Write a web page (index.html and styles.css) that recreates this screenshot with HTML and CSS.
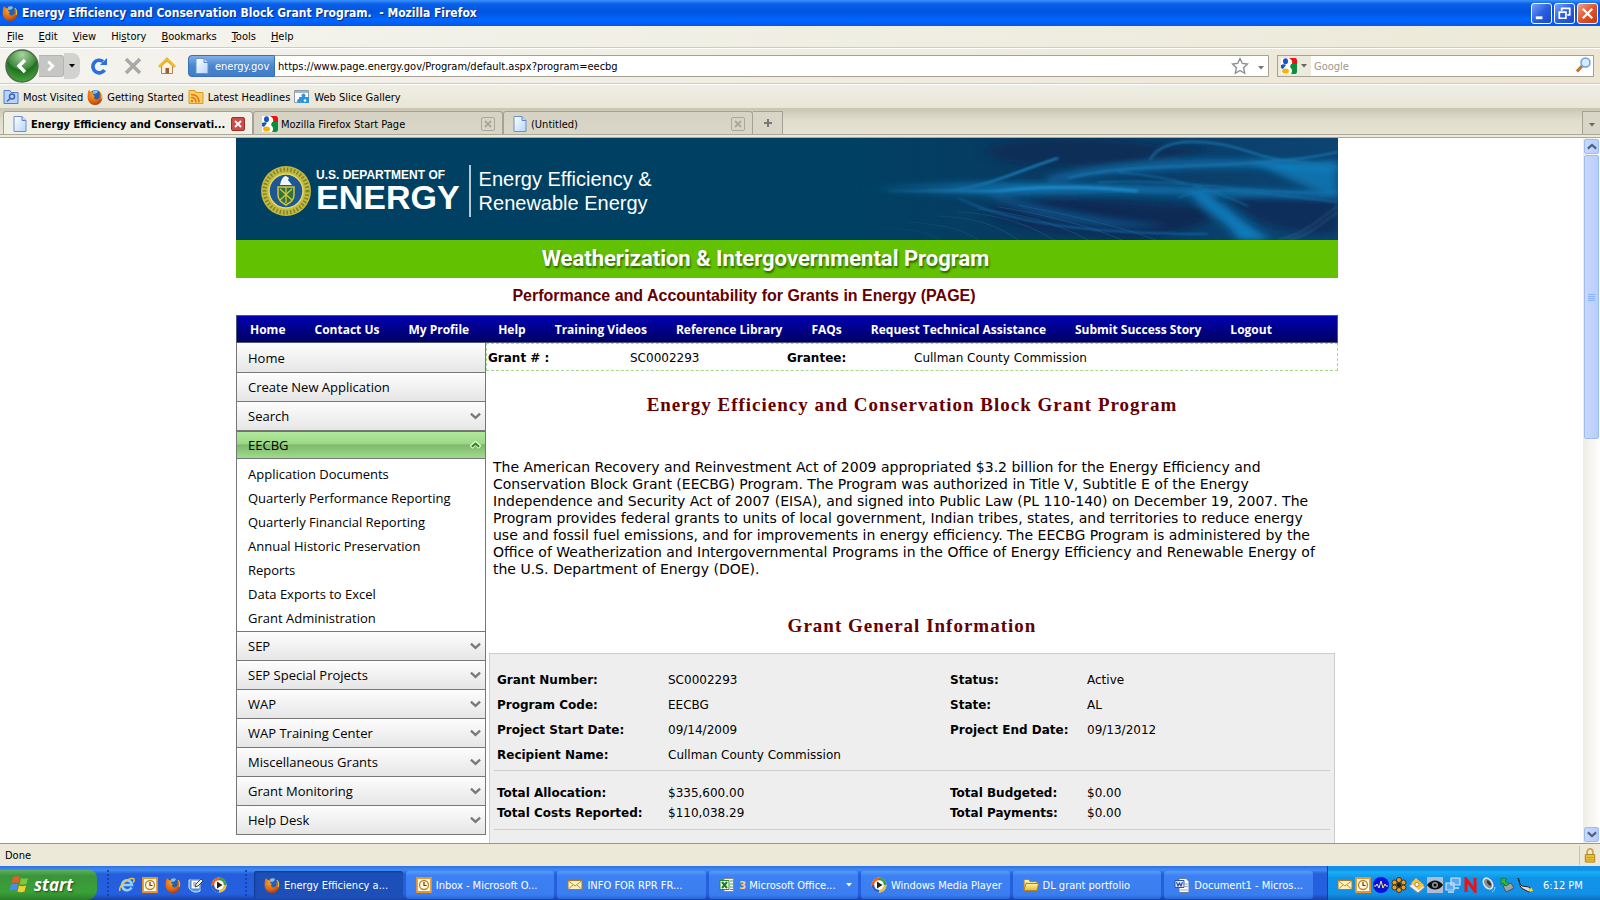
FILE: index.html
```html
<!DOCTYPE html>
<html lang="en">
<head>
  <meta charset="utf-8">
  <title>Energy Efficiency and Conservation Block Grant Program.</title>
  <link rel="stylesheet" href="styles.css">
</head>
<body>
  <!-- shared icons -->
  <svg class="sprite" aria-hidden="true">
    <defs>
      <linearGradient id="g-page" x1="0" y1="0" x2="1" y2="1"><stop offset="0" stop-color="#fff"/><stop offset="1" stop-color="#b5d5fa"/></linearGradient>
      <linearGradient id="g-folder" x1="0" y1="0" x2="0" y2="1"><stop offset="0" stop-color="#fff3a8"/><stop offset="1" stop-color="#e8b93a"/></linearGradient>
      <radialGradient id="g-fox" cx="0.4" cy="0.3" r="0.8"><stop offset="0" stop-color="#f9a52c"/><stop offset="0.6" stop-color="#dd6413"/><stop offset="1" stop-color="#9c3208"/></radialGradient>
      <radialGradient id="g-back" cx="0.5" cy="0.15" r="0.9"><stop offset="0" stop-color="#a9d3a0"/><stop offset="0.5" stop-color="#3f8a3a"/><stop offset="0.55" stop-color="#1f6f20"/><stop offset="1" stop-color="#4fae43"/></radialGradient>
    </defs>
    <symbol id="firefox" viewBox="0 0 16 16">
      <circle cx="8.5" cy="7.5" r="6.5" fill="#2260b4"/>
      <path d="M6 2c2-1 4-1 5 0l-1 2-2 1-2-1z" fill="#7fc0ee"/>
      <path d="M1 3l1-2 2 2c1 0 2 0 3 1L6 6l2 1-1 1c0 2 2 3 4 2 2-1 2-3 1-5l1 1c0-1 0-2-1-3 3 2 4 5 3 8s-4 5-7 5-6-2-7-5C0 7 1 5 1 3z" fill="url(#g-fox)"/>
      <path d="M13 3c2 2 2 5 1 7" stroke="#ffc93a" fill="none"/>
    </symbol>
    <symbol id="page" viewBox="0 0 16 16">
      <path d="M2 .5h8l4 4v11H2z" fill="url(#g-page)" stroke="#6f8fc8"/>
      <path d="M10 .5v4h4" fill="#c3dcf8" stroke="#5c84c8"/>
    </symbol>
    <symbol id="google" viewBox="0 0 16 16">
      <path d="M0 0h16v16H0z" fill="#fff"/>
      <path d="M8 0h6a2 2 0 0 1 2 2v4h-5c1-3-1-5-3-6z" fill="#e11"/>
      <path d="M10 6h6v8a2 2 0 0 1-2 2h-4c2-3 1-5-1-7z" fill="#0a8f3c"/>
      <ellipse cx="4.500" cy="3.200" rx="2.500" ry="3" fill="#1656c0"/>
      <path d="M0 7c2-1 4-1 5 0l-3 4-2-1z" fill="#1656c0"/>
      <ellipse cx="4.500" cy="13" rx="3.500" ry="2.600" fill="#f2b50f"/>
    </symbol>
    <symbol id="visited" viewBox="0 0 16 16">
      <path d="M1 1.500h6l1 2h7v11H1z" fill="#b9d3fb" stroke="#4e7ecf"/>
      <circle cx="9" cy="7.500" r="2.500" fill="none" stroke="#3a63c0" stroke-width="1.500"/>
      <path d="M7 9.500l-3 3" stroke="#3a63c0" stroke-width="1.500"/>
    </symbol>
    <symbol id="feed" viewBox="0 0 16 16">
      <path d="M1 1.500h6l1 2h7v11H1z" fill="#f9cf62" stroke="#dc9b20"/>
      <circle cx="4" cy="12" r="1.200" fill="#e8741a"/>
      <path d="M3 8.500c3 0 5 2 5 5M3 5.500c5 0 8 3 8 8" stroke="#e8741a" fill="none" stroke-width="1.500"/>
    </symbol>
    <symbol id="slice" viewBox="0 0 16 16">
      <path d="M.5 1.500h14v12H.5z" fill="#fff" stroke="#8e9ab0"/>
      <path d="M1 2h13v2H1z" fill="#a9b4c6"/>
      <path d="M5 8h3a2 2 0 1 1 3 0h4v6H7v-2a2 2 0 1 1-2-2z" fill="#2d93dc"/>
      <circle cx="11" cy="11.500" r="1.300" fill="#fff"/>
    </symbol>
    <symbol id="outlook" viewBox="0 0 16 16">
      <path d="M1 1h14v14H1z" fill="#fffbe8" stroke="#e8952b" stroke-width="1.800"/>
      <circle cx="8" cy="8" r="4.500" fill="#fff6dc" stroke="#b8842c" stroke-width="1.300"/>
      <path d="M8 5v3.500h2.500" fill="none" stroke="#55401c" stroke-width="1.200"/>
    </symbol>
    <symbol id="mail" viewBox="0 0 16 16">
      <path d="M1 3.500h14v9H1z" fill="#fff2bc" stroke="#a67a28"/>
      <path d="M1.500 4l6.500 5 6.500-5M1.500 12l4.500-4M14.500 12L10 8" fill="none" stroke="#b98f3c"/>
    </symbol>
    <symbol id="wmp" viewBox="0 0 16 16">
      <circle cx="8" cy="8" r="7.500" fill="#ececf4"/>
      <path d="M8 .5A7.500 7.500 0 0 0 .5 8H8z" fill="#e8601c"/>
      <path d="M8 .5A7.500 7.500 0 0 1 15.500 8H8z" fill="#3d9c3d"/>
      <path d="M.5 8A7.500 7.500 0 0 0 8 15.500V8z" fill="#2b62c8"/>
      <path d="M15.500 8A7.500 7.500 0 0 1 8 15.500V8z" fill="#f4bc28"/>
      <circle cx="8" cy="8" r="4.800" fill="#fff"/>
      <path d="M6 4.500v7L11.500 8z" fill="#222"/>
    </symbol>
    <symbol id="excel" viewBox="0 0 16 16">
      <path d="M5 1.500h9.500v13H5z" fill="#fff" stroke="#888"/>
      <path d="M11 4h3M11 7h3M11 10h3M11 12.500h3" stroke="#4a9a4a"/>
      <path d="M1 3.500h9v9H1z" fill="#f3fff0" stroke="#2c8a30"/>
      <path d="M3 5l5 6M8 5l-5 6" stroke="#1f7a26" stroke-width="2"/>
    </symbol>
    <symbol id="word" viewBox="0 0 16 16">
      <path d="M5 1.500h7l3 3v11H5z" fill="#fff" stroke="#66799c"/>
      <path d="M11 7h3M11 9.500h3M6 13h8" stroke="#8ea6d0"/>
      <path d="M1 3.500h9v7H1z" fill="#e8f0ff" stroke="#2b52a8"/>
      <path d="M2.500 5l1.500 4 1.500-3 1.500 3 1.500-4" fill="none" stroke="#2b52a8" stroke-width="1.200"/>
    </symbol>
    <symbol id="folder" viewBox="0 0 16 16">
      <path d="M1 2.500h5l1 2h7v9H1z" fill="url(#g-folder)" stroke="#ad8420"/>
      <path d="M1 13.500l2-7h12.500l-1.500 7z" fill="url(#g-folder)" stroke="#ad8420"/>
    </symbol>
    <symbol id="ie" viewBox="0 0 16 16">
      <path d="M12.500 10.500A5 5 0 1 1 13 8H4" fill="none" stroke="#8fd4ff" stroke-width="2.600"/>
      <path d="M1 14C-1 10 8 1 14 1.500c2 .5 1 3 0 4" fill="none" stroke="#f3c53a" stroke-width="1.500"/>
    </symbol>
    <symbol id="desktop" viewBox="0 0 16 16">
      <path d="M1 3h11v11a8 8 0 0 1-11-3z" fill="#4aa0ea" stroke="#cfe6ff"/>
      <path d="M3 3h9v9H3z" fill="#fff" stroke="#5b7fb5"/>
      <path d="M5 6h3M5 8h2" stroke="#5b7fb5"/>
      <path d="M7 10l1-3 5-5 2 2-5 5z" fill="#f2f2e0" stroke="#445"/>
    </symbol>
    <symbol id="down" viewBox="0 0 12 8">
      <path d="M1 1.500l5 4.500 5-4.500" fill="none" stroke="currentColor" stroke-width="2.600"/>
    </symbol>
    <symbol id="up" viewBox="0 0 12 8">
      <path d="M1 6.500L6 2l5 4.500" fill="none" stroke="currentColor" stroke-width="2.600"/>
    </symbol>
    <symbol id="up-lit" viewBox="0 0 12 8">
      <path d="M1 6.500L6 2l5 4.500" fill="none" stroke="#e4f7dc" stroke-width="4.500"/>
      <path d="M2 6L6 2.500l4 3.500" fill="none" stroke="currentColor" stroke-width="2.200"/>
    </symbol>
    <symbol id="caret" viewBox="0 0 6 4"><path d="M0 0h6L3 3.500z" fill="currentColor"/></symbol>
    <symbol id="cross" viewBox="0 0 8 8"><path d="M1 1l6 6M7 1L1 7" stroke="currentColor" stroke-width="1.800"/></symbol>
  </svg>

  <header class="titlebar">
    <svg class="icon"><use href="#firefox"/></svg>
    <span class="window-title">Energy Efficiency and Conservation Block Grant Program.&nbsp; - Mozilla Firefox</span>
    <div class="window-buttons">
      <button type="button" aria-label="Minimize"><svg viewBox="0 0 20 20"><path d="M4 13h7v3H4z" fill="#fff"/></svg></button>
      <button type="button" aria-label="Restore"><svg viewBox="0 0 20 20"><path d="M7 7V4.500h8.500v7H13" fill="none" stroke="#fff" stroke-width="1.800"/><path d="M4.500 8.500h7v6.500h-7z" fill="none" stroke="#fff" stroke-width="1.800"/></svg></button>
      <button type="button" class="close" aria-label="Close"><svg viewBox="0 0 20 20"><path d="M5 5l10 10M15 5L5 15" stroke="#fff" stroke-width="2.500"/></svg></button>
    </div>
  </header>

  <nav class="menubar">
    <button type="button"><u>F</u>ile</button>
    <button type="button"><u>E</u>dit</button>
    <button type="button"><u>V</u>iew</button>
    <button type="button">Hi<u>s</u>tory</button>
    <button type="button"><u>B</u>ookmarks</button>
    <button type="button"><u>T</u>ools</button>
    <button type="button"><u>H</u>elp</button>
  </nav>

  <div class="toolbar">
    <div class="history-buttons">
      <button type="button" class="back" aria-label="Back"><svg viewBox="0 0 34 34"><circle cx="17" cy="17" r="16" fill="url(#g-back)" stroke="#4c6b49" stroke-width="1.500"/><path d="M20 11l-6 6 6 6" fill="none" stroke="#fff" stroke-width="3.500"/></svg></button>
      <button type="button" class="forward" aria-label="Forward"><svg viewBox="0 0 20 22"><path d="M7 6l5 5-5 5" fill="none" stroke="#fff" stroke-width="3"/></svg></button>
      <button type="button" class="recent" aria-label="Recent pages"><svg class="caret"><use href="#caret"/></svg></button>
    </div>
    <button type="button" class="tool" aria-label="Reload"><svg viewBox="0 0 18 18"><path d="M14.500 13A6.300 6.300 0 1 1 13 4.500" fill="none" stroke="#2a6fe0" stroke-width="3.600"/><path d="M17 1v7h-7z" fill="#2a6fe0"/></svg></button>
    <button type="button" class="tool" aria-label="Stop"><svg viewBox="0 0 18 18"><path d="M2 2l14 14M16 2L2 16" stroke="#a9a9a5" stroke-width="3.500"/></svg></button>
    <button type="button" class="tool" aria-label="Home"><svg viewBox="0 0 18 18"><path d="M3.500 9v7.500h11V9L9 4z" fill="#fff4e2" stroke="#a8855c"/><path d="M7.500 11h3.500v5.500H7.500z" fill="#9c5f2a"/><path d="M1 10l8-8 8 8" fill="none" stroke="#f5b829" stroke-width="2.800"/></svg></button>
    <div class="address">
      <button type="button" class="identity"><svg class="icon"><use href="#page"/></svg>energy.gov</button>
      <input type="text" aria-label="Address" value="https://www.page.energy.gov/Program/default.aspx?program=eecbg">
      <button type="button" class="star" aria-label="Bookmark this page"><svg viewBox="0 0 18 18"><path d="M9 1.500l2.300 5 5.200.6-3.900 3.600 1.100 5.600L9 13.500l-4.700 2.800 1.100-5.600L1.500 7.100l5.200-.6z" fill="#fff" stroke="#8b8b8b" stroke-width="1.300"/></svg></button>
      <button type="button" class="drop" aria-label="Show history"><svg class="caret"><use href="#caret"/></svg></button>
    </div>
    <div class="search">
      <button type="button" class="engine" aria-label="Search engine"><svg class="icon"><use href="#google"/></svg><svg class="caret"><use href="#caret"/></svg></button>
      <input type="text" aria-label="Search" placeholder="Google">
      <button type="button" aria-label="Search"><svg class="icon" viewBox="0 0 16 16"><path d="M7 9l-5 5.500" stroke="#c4762c" stroke-width="3.200"/><circle cx="10.500" cy="5.500" r="4.500" fill="#d3ecff" stroke="#6da0d8" stroke-width="1.500"/></svg></button>
    </div>
  </div>

  <div class="bookmarks">
    <a href="#"><svg class="icon"><use href="#visited"/></svg>Most Visited</a>
    <a href="#"><svg class="icon"><use href="#firefox"/></svg>Getting Started</a>
    <a href="#"><svg class="icon"><use href="#feed"/></svg>Latest Headlines</a>
    <a href="#"><svg class="icon"><use href="#slice"/></svg>Web Slice Gallery</a>
  </div>

  <div class="tabs">
    <div class="tab active">
      <svg class="icon"><use href="#page"/></svg><span>Energy Efficiency and Conservati...</span>
      <button type="button" aria-label="Close tab"><svg><use href="#cross"/></svg></button>
    </div>
    <div class="tab">
      <svg class="icon"><use href="#google"/></svg><span>Mozilla Firefox Start Page</span>
      <button type="button" aria-label="Close tab"><svg><use href="#cross"/></svg></button>
    </div>
    <div class="tab">
      <svg class="icon"><use href="#page"/></svg><span>(Untitled)</span>
      <button type="button" aria-label="Close tab"><svg><use href="#cross"/></svg></button>
    </div>
    <button type="button" class="new-tab" aria-label="New tab"><svg viewBox="0 0 8 8"><path d="M4 0v8M0 4h8" stroke="#777" stroke-width="2"/></svg></button>
    <button type="button" class="all-tabs" aria-label="List all tabs"><svg class="caret"><use href="#caret"/></svg></button>
  </div>

  <div class="viewport">
    <div class="document">
      <div class="site">
        <div class="banner">
          <svg class="waves" viewBox="0 0 490 102" preserveAspectRatio="none" aria-hidden="true">
            <defs>
              <linearGradient id="wave-bg" x1="0" x2="1" y1="0" y2="0"><stop offset="0" stop-color="#004163"/><stop offset="0.4" stop-color="#0a3a62"/><stop offset="1" stop-color="#0c4472"/></linearGradient>
              <linearGradient id="fade" x1="0" x2="1" y1="0" y2="0"><stop offset="0" stop-color="#000"/><stop offset="0.35" stop-color="#fff"/></linearGradient>
              <mask id="fade-in"><path d="M0 0h490v102H0z" fill="url(#fade)"/></mask>
              <filter id="soft" x="-10%" y="-30%" width="120%" height="160%"><feGaussianBlur stdDeviation="6 3"/></filter>
              <filter id="fine" x="-10%" y="-30%" width="120%" height="160%"><feGaussianBlur stdDeviation="1.500 1"/></filter>
            </defs>
            <path d="M0 0h490v102H0z" fill="url(#wave-bg)"/>
            <g mask="url(#fade-in)">
              <g filter="url(#soft)">
                <path d="M150 6c90-14 160 4 200 4s-70 18-120 18-120-6-80-22z" fill="#0b2d57"/>
                <path d="M150 66c80-14 150 6 210 0s-30 40-90 34-160-14-120-34z" fill="#0a2a54"/>
                <path d="M380 62c40-12 80-8 110 0v34c-60 0-90-14-110-34z" fill="#0a2e5a"/>
                <path d="M10 50c80-8 150-6 240-4 60 2 120 4 240 8v6c-120-2-200-6-280-4S90 58 10 50z" fill="#0f7ab8" opacity=".8"/>
                <path d="M200 38c80-16 160-22 290-12v8c-120-8-200-2-290 10z" fill="#106aa6" opacity=".8"/>
                <path d="M400 22c30 0 60 4 90 0v34c-30-4-50-16-90-34z" fill="#148fd2" opacity=".6"/>
                <path d="M340 50c30 6 50 34 84 52h-34c-10-22-40-30-50-52z" fill="#1284c8" opacity=".9"/>
                <path d="M120 48c60 20 130 34 200 40-80 6-150-12-200-40z" fill="#1166a2" opacity=".6"/>
              </g>
              <g fill="none" filter="url(#fine)">
                <path d="M80 52c50 2 70-12 130-32" stroke="#1c86c4" stroke-width="2"/>
                <path d="M40 53h110c50-6 100-4 140 0" stroke="#1f8fd0" stroke-width="3" opacity=".8"/>
                <path d="M302 22c12-24 60-22 100-8s60 8 88 16" stroke="#1c6ea4" stroke-width="2"/>
                <path d="M220 40c70-18 180-6 270-26" stroke="#1b7ab4" stroke-width="1.500"/>
                <path d="M250 44c90-4 160 14 240 10M270 34c60 6 90 16 130 34M330 60c30-14 70-6 160 4" stroke="#1872ac" stroke-width="1.500" opacity=".7"/>
                <path d="M110 60c60 30 160 36 250 36" stroke="#0e5f98" stroke-width="2"/>
                <path d="M440 102c20-4 30-14 50-28M430 102c30-8 40-20 60-34" stroke="#5387ab" opacity=".6"/>
              </g>
              <g fill="none" stroke="#2a6c98" stroke-width=".8" opacity=".5">
                <path d="M90 78c40 2 60 10 80 24M110 74c40 2 70 12 96 28M130 71c40 4 80 14 110 31M150 69c40 6 90 18 124 33M170 67c40 8 100 20 138 35M60 84c34 2 56 8 70 18M30 90c34 0 50 4 60 12"/>
              </g>
            </g>
          </svg>
          <svg class="seal" viewBox="0 0 52 52" aria-hidden="true">
            <circle cx="26" cy="26" r="25" fill="#c4b83c"/>
            <circle cx="26" cy="26" r="21.500" fill="none" stroke="#7c842c" stroke-width="4" stroke-dasharray="1.500 2"/>
            <circle cx="26" cy="26" r="17" fill="#1d5794" stroke="#e2d872" stroke-width="1.500"/>
            <path d="M18 22h16v8c0 5-4 8-8 10-4-2-8-5-8-10z" fill="#2f7341" stroke="#d5c53c" stroke-width="1.500"/>
            <path d="M20 35l12-11M20 24l12 11M26 22v16" stroke="#d5c53c" stroke-width="1.300"/>
            <path d="M20 20c1-5 3-9 6-9l3 2-1 2 4 5z" fill="#f2f4f5"/>
          </svg>
          <div class="agency">
            <span class="agency-dept">U.S. DEPARTMENT OF</span>
            <span class="agency-name">ENERGY</span>
          </div>
          <div class="office">Energy Efficiency &amp;<br>Renewable Energy</div>
        </div>
        <div class="program-bar">Weatherization &amp; Intergovernmental Program</div>
        <h1 class="page-name">Performance and Accountability for Grants in Energy (PAGE)</h1>

        <nav class="main-nav">
          <a href="#">Home</a>
          <a href="#">Contact Us</a>
          <a href="#">My Profile</a>
          <a href="#">Help</a>
          <a href="#">Training Videos</a>
          <a href="#">Reference Library</a>
          <a href="#">FAQs</a>
          <a href="#">Request Technical Assistance</a>
          <a href="#">Submit Success Story</a>
          <a href="#">Logout</a>
        </nav>

        <div class="columns">
          <aside class="sidebar">
            <a class="side-item" href="#">Home</a>
            <a class="side-item" href="#">Create New Application</a>
            <button type="button" class="side-item">Search<svg><use href="#down"/></svg></button>
            <button type="button" class="side-item open">EECBG<svg><use href="#up-lit"/></svg></button>
            <ul class="submenu">
              <li><a href="#">Application Documents</a></li>
              <li><a href="#">Quarterly Performance Reporting</a></li>
              <li><a href="#">Quarterly Financial Reporting</a></li>
              <li><a href="#">Annual Historic Preservation</a></li>
              <li><a href="#">Reports</a></li>
              <li><a href="#">Data Exports to Excel</a></li>
              <li><a href="#">Grant Administration</a></li>
            </ul>
            <button type="button" class="side-item">SEP<svg><use href="#down"/></svg></button>
            <button type="button" class="side-item">SEP Special Projects<svg><use href="#down"/></svg></button>
            <button type="button" class="side-item">WAP<svg><use href="#down"/></svg></button>
            <button type="button" class="side-item">WAP Training Center<svg><use href="#down"/></svg></button>
            <button type="button" class="side-item">Miscellaneous Grants<svg><use href="#down"/></svg></button>
            <button type="button" class="side-item">Grant Monitoring<svg><use href="#down"/></svg></button>
            <button type="button" class="side-item">Help Desk<svg><use href="#down"/></svg></button>
          </aside>

          <main class="content">
            <dl class="grant-bar">
              <dt>Grant # :</dt>
              <dd>SC0002293</dd>
              <dt>Grantee:</dt>
              <dd>Cullman County Commission</dd>
            </dl>

            <h2>Energy Efficiency and Conservation Block Grant Program</h2>
            <p class="intro">The American Recovery and Reinvestment Act of 2009 appropriated $3.2 billion for the Energy Efficiency and Conservation Block Grant (EECBG) Program. The Program was authorized in Title V, Subtitle E of the Energy Independence and Security Act of 2007 (EISA), and signed into Public Law (PL 110-140) on December 19, 2007. The Program provides federal grants to units of local government, Indian tribes, states, and territories to reduce energy use and fossil fuel emissions, and for improvements in energy efficiency. The EECBG Program is administered by the Office of Weatherization and Intergovernmental Programs in the Office of Energy Efficiency and Renewable Energy of the U.S. Department of Energy (DOE).</p>

            <h2>Grant General Information</h2>
            <div class="panel">
              <table class="details">
                <tr><th scope="row">Grant Number:</th><td>SC0002293</td><th scope="row">Status:</th><td>Active</td></tr>
                <tr><th scope="row">Program Code:</th><td>EECBG</td><th scope="row">State:</th><td>AL</td></tr>
                <tr><th scope="row">Project Start Date:</th><td>09/14/2009</td><th scope="row">Project End Date:</th><td>09/13/2012</td></tr>
                <tr><th scope="row">Recipient Name:</th><td colspan="3">Cullman County Commission</td></tr>
              </table>
              <table class="details totals">
                <tr><th scope="row">Total Allocation:</th><td>$335,600.00</td><th scope="row">Total Budgeted:</th><td>$0.00</td></tr>
                <tr><th scope="row">Total Costs Reported:</th><td>$110,038.29</td><th scope="row">Total Payments:</th><td>$0.00</td></tr>
              </table>
            </div>
          </main>
        </div>
      </div>
    </div>
    <div class="scrollbar">
      <button type="button" aria-label="Scroll up"><svg><use href="#up"/></svg></button>
      <div class="thumb"><i></i><i></i><i></i><i></i></div>
      <button type="button" class="last" aria-label="Scroll down"><svg><use href="#down"/></svg></button>
    </div>
  </div>

  <footer class="statusbar">
    <span>Done</span>
    <span class="lock"><svg viewBox="0 0 12 16"><path d="M3 8V4a3 3 0 0 1 6 0v4" fill="none" stroke="#c8a548" stroke-width="1.800"/><path d="M1 7h10v8H1z" fill="#eec23c" stroke="#a97e18"/><path d="M2 10h8M2 12.500h8" stroke="#c99722"/></svg></span>
  </footer>

  <div class="taskbar">
    <button type="button" class="start"><svg viewBox="0 0 20 20"><path d="M3 3c3-1 5-1 7 0L8.500 9c-2-1-4-1-7 0z" fill="#ee5a24"/><path d="M11 4c2 1 4 1 7 0l-1.500 6c-3 1-5 1-7 0z" fill="#7fc73a"/><path d="M1 10.500c3-1 5-1 7 0l-1.500 6c-2-1-4-1-7 0z" fill="#4a8df0"/><path d="M9 11.500c2 1 4 1 7 0l-1.500 6c-3 1-5 1-7 0z" fill="#f8cf2e"/></svg>start</button>
    <div class="quick-launch">
      <svg class="icon"><use href="#ie"/></svg>
      <svg class="icon"><use href="#outlook"/></svg>
      <svg class="icon"><use href="#firefox"/></svg>
      <svg class="icon"><use href="#desktop"/></svg>
      <svg class="icon"><use href="#wmp"/></svg>
    </div>
    <div class="tasks">
      <button type="button" class="current"><svg class="icon"><use href="#firefox"/></svg><span>Energy Efficiency a...</span></button>
      <button type="button"><svg class="icon"><use href="#outlook"/></svg><span>Inbox - Microsoft O...</span></button>
      <button type="button"><svg class="icon"><use href="#mail"/></svg><span>INFO FOR RPR FR...</span></button>
      <button type="button"><svg class="icon"><use href="#excel"/></svg><span><b>3</b> Microsoft Office...</span><svg class="caret"><use href="#caret"/></svg></button>
      <button type="button"><svg class="icon"><use href="#wmp"/></svg><span>Windows Media Player</span></button>
      <button type="button"><svg class="icon"><use href="#folder"/></svg><span>DL grant portfolio</span></button>
      <button type="button"><svg class="icon"><use href="#word"/></svg><span>Document1 - Micros...</span></button>
    </div>
    <div class="tray">
      <svg class="icon"><use href="#mail"/></svg>
      <svg class="icon"><use href="#outlook"/></svg>
      <svg class="icon" viewBox="0 0 16 16"><circle cx="8" cy="8" r="8" fill="#0a12e0"/><path d="M1 9h2l1-2 2 4 2-7 2 7 2-4 1 2h2" fill="none" stroke="#f4ee50"/></svg>
      <svg class="icon" viewBox="0 0 16 16"><g fill="#f49a18" stroke="#221" stroke-width=".8"><circle cx="8" cy="3" r="2.500"/><circle cx="8" cy="13" r="2.500"/><circle cx="3.500" cy="5.500" r="2.500"/><circle cx="12.500" cy="5.500" r="2.500"/><circle cx="3.500" cy="10.500" r="2.500"/><circle cx="12.500" cy="10.500" r="2.500"/></g><circle cx="8" cy="8" r="2.200" fill="#221"/></svg>
      <svg class="icon" viewBox="0 0 16 16"><path d="M0 9l7-5 9 6-7 6z" fill="#eee" stroke="#8a8a8a"/><path d="M2 6l5-5 8 7-5 5z" fill="#f7c23c"/><circle cx="8" cy="7.500" r="2" fill="#fff" stroke="#b98a20"/></svg>
      <svg class="icon" viewBox="0 0 16 16"><path d="M0 0h16v16H0z" fill="#aebdd4"/><path d="M0 8c4-6 12-6 16 0-4 6-12 6-16 0z" fill="#111"/><circle cx="8" cy="8" r="3" fill="#8d97a6"/><circle cx="8" cy="8" r="1.500" fill="#000"/></svg>
      <svg class="icon" viewBox="0 0 16 16"><path d="M6 1h9v7H6zM1 6h8v7H1z" fill="#5aa8f0" stroke="#d4e6fa" stroke-width="1.200"/><path d="M3 15h6M9 11h5" stroke="#d4dce8" stroke-width="1.500"/></svg>
      <svg class="icon" viewBox="0 0 16 16"><path d="M3 15V2l9 12V1" fill="none" stroke="#f01010" stroke-width="3"/></svg>
      <svg class="icon" viewBox="0 0 16 16"><ellipse cx="7" cy="6.500" rx="4" ry="6" transform="rotate(-35 7 6.500)" fill="#8a8d92" stroke="#e2e4e8" stroke-width="1.500"/><ellipse cx="8" cy="6" rx="1.500" ry="3" transform="rotate(-35 8 6)" fill="#333"/><path d="M11 15c2-1 3-3 3-5" fill="none" stroke="#9fd0ff"/></svg>
      <svg class="icon" viewBox="0 0 16 16"><path d="M4 9l8-3 3 5-8 4z" fill="#9aa4a6" stroke="#4a5558"/><path d="M2 1l6 1-2 2 4 3-3 2-3-3-2 2z" fill="#35b62c" stroke="#14701a" stroke-width=".7"/></svg>
      <svg class="icon" viewBox="0 0 16 16"><path d="M1 1c2 3 1 6 4 8l7 1 3 4-3 1-6-3C2 10 3 5 1 1z" fill="#ddd" stroke="#222"/><path d="M11 12l4-1 1 3-3 1z" fill="#f5d528"/></svg>
      <time>6:12 PM</time>
    </div>
  </div>
</body>
</html>
```
FILE: styles.css
```css
* {
  box-sizing: border-box;
}

body {
  margin: 0;
  height: 100vh;
  display: flex;
  flex-direction: column;
  overflow: hidden;
  font-family: "DejaVu Sans Condensed", "DejaVu Sans", sans-serif;
  font-size: 11px;
  color: #000;
  background: #ece9d8;
}

button,
input {
  font: inherit;
  color: inherit;
  margin: 0;
  padding: 0;
  border: none;
  background: none;
}

a {
  color: inherit;
  text-decoration: none;
}

.sprite {
  position: absolute;
  width: 0;
  height: 0;
}

.icon {
  width: 16px;
  height: 16px;
  flex: none;
}

.caret {
  width: 6px;
  height: 4px;
  flex: none;
}

/* window frame */
.titlebar {
  display: flex;
  align-items: center;
  height: 26px;
  flex: none;
  padding: 0 2px;
  background: linear-gradient(#3a93ff 0, #0a5fe6 4px, #0054e0 12px, #0066ff 20px, #0059ec 26px);
}

.window-title {
  flex: 1;
  padding-left: 4px;
  font-size: 12px;
  font-weight: bold;
  color: #fff;
  text-shadow: 1px 1px #0a2a80;
}

.window-buttons {
  display: flex;
  gap: 2px;
}

.window-buttons button {
  width: 21px;
  height: 21px;
  border: 1px solid #fff;
  border-radius: 3px;
  background: linear-gradient(135deg, #7ba2f5, #2a5fe0 50%, #1a48c8);
}

.window-buttons .close {
  background: linear-gradient(135deg, #f0a088, #e0532c 50%, #c43a10);
}

.window-buttons svg {
  display: block;
  width: 19px;
  height: 19px;
}

.menubar {
  display: flex;
  align-items: center;
  gap: 15px;
  height: 22px;
  flex: none;
  padding: 0 7px;
  border-bottom: 1px solid #d0ccb8;
  background: linear-gradient(90deg, #f4f4ef, #ece9d8);
}

.toolbar {
  display: flex;
  align-items: center;
  height: 36px;
  flex: none;
  padding: 0 6px 0 5px;
  border-top: 1px solid #fff;
  border-bottom: 1px solid #d0ccb8;
  background: linear-gradient(90deg, #f4f3ee, #ece6d2);
}

.history-buttons {
  display: flex;
  align-items: center;
  margin-right: 10px;
}

.history-buttons button {
  display: flex;
  align-items: center;
  justify-content: center;
}

.back {
  width: 34px;
  height: 34px;
}

.forward {
  width: 25px;
  height: 22px;
  border: 1px solid #b4b4b2;
  border-left: none;
  border-radius: 0 3px 3px 0;
  background: #c6c6c5;
}

.forward svg {
  width: 18px;
  height: 20px;
}

.recent {
  width: 16px;
  height: 26px;
  border-radius: 0 8px 8px 0;
  background: #d2d2d0;
}

.tool {
  width: 18px;
  height: 18px;
  margin-right: 16px;
}

.tool svg,
.star svg {
  display: block;
  width: 18px;
  height: 18px;
}

.address,
.search {
  display: flex;
  align-items: center;
  height: 22px;
  border: 1px solid #a5a295;
  background: #fff;
}

.address {
  flex: 1;
  margin: 0 8px 0 -4px;
  padding-right: 4px;
  border-radius: 4px 0 0 4px;
}

.address input,
.search input {
  flex: 1;
  min-width: 0;
  padding: 0 3px;
  outline: none;
}

.search input::placeholder {
  color: #9b988c;
}

.identity {
  display: flex;
  align-items: center;
  gap: 5px;
  height: 22px;
  width: 87px;
  padding: 0 4px 0 5px;
  margin-left: -1px;
  border: 1px solid #3a70b8;
  border-radius: 4px 0 0 4px;
  color: #fff;
  background: linear-gradient(#7fb0e8, #4a86d0 50%, #3f7dca);
  white-space: nowrap;
}

.drop {
  padding-left: 9px;
  color: #777;
}

.search {
  width: 317px;
  padding-right: 2px;
}

.engine {
  display: flex;
  align-items: center;
  gap: 4px;
  height: 20px;
  padding: 0 4px 0 3px;
  color: #666;
  background: #ece9dd;
}

.bookmarks {
  display: flex;
  align-items: center;
  gap: 4px;
  height: 24px;
  flex: none;
  padding: 1px 3px 0;
  border-top: 1px solid #fff;
  background: linear-gradient(#efeee4, #e9e6d6);
}

.bookmarks a {
  display: flex;
  align-items: center;
  gap: 4px;
}

.tabs {
  display: flex;
  align-items: flex-end;
  height: 30px;
  flex: none;
  padding: 4px 0 3px 3px;
  background: linear-gradient(#c9c5b5, #dfddcb 12px, #e6e3d2 26px, #aca899 26px, #aca899 27px, #ece9d8 27px);
  border-bottom: 1px solid #aca899;
}

.tab {
  display: flex;
  align-items: center;
  width: 250px;
  height: 23px;
  padding: 2px 7px 0 8px;
  border: 1px solid #a5a295;
  border-bottom: none;
  border-radius: 3px 3px 0 0;
  background: linear-gradient(#d6d3c4, #d9d6c8);
}

.tab.active {
  font-weight: bold;
  background: #f1f0e6;
}

.tab span {
  flex: 1;
  padding-left: 3px;
  white-space: nowrap;
}

.tab button {
  display: flex;
  align-items: center;
  justify-content: center;
  width: 14px;
  height: 14px;
  border: 1px solid #aaa79c;
  border-radius: 2px;
  color: #aaa79c;
}

.tab.active button {
  border-color: #9c2f2c;
  color: #fff;
  background: #d04c48;
}

.tab button svg {
  width: 8px;
  height: 8px;
}

.new-tab {
  width: 30px;
  height: 23px;
  border: 1px solid #a5a295;
  border-bottom: none;
  border-left: none;
  background: #d9d6c8;
}

.new-tab svg {
  width: 8px;
  height: 8px;
}

.all-tabs {
  width: 18px;
  height: 23px;
  margin-left: auto;
  border: 1px solid #a5a295;
  border-right: none;
  border-bottom: none;
  color: #666;
  background: #d9d6c8;
}

/* page area */
.viewport {
  display: flex;
  flex: 1;
  min-height: 0;
  border-bottom: 1px solid #9a9786;
  background: #fff;
}

.document {
  flex: 1;
  min-width: 0;
  padding-right: 9px;
  overflow: hidden;
}

.scrollbar {
  display: flex;
  flex-direction: column;
  align-items: center;
  width: 17px;
  padding: 1px 0;
  background: linear-gradient(90deg, #eeede5, #fefefb);
}

.scrollbar button,
.thumb {
  display: flex;
  align-items: center;
  justify-content: center;
  width: 15px;
  height: 15px;
  flex: none;
  border: 1px solid #9ebcf2;
  border-radius: 2px;
  color: #4d6185;
  background: linear-gradient(90deg, #c8d8fe, #b8cefb);
}

.scrollbar svg {
  width: 10px;
  height: 7px;
}

.scrollbar .thumb {
  flex-direction: column;
  gap: 1px;
  height: 284px;
  margin-top: 1px;
}

.thumb i {
  width: 7px;
  height: 1px;
  background: #8ab0f8;
}

.scrollbar .last {
  margin-top: auto;
}

/* site */
.site {
  max-width: 1102px;
  margin: 0 auto;
}

.banner {
  position: relative;
  display: flex;
  align-items: center;
  height: 102px;
  padding: 4px 0 0 24px;
  color: #fff;
  background: #004163;
}

.waves {
  position: absolute;
  right: 0;
  top: 0;
  width: 490px;
  height: 102px;
}

.seal {
  width: 52px;
  height: 52px;
}

.agency {
  display: flex;
  flex-direction: column;
  padding: 0 9px 2px 4px;
  font-family: "Liberation Sans", Arial, sans-serif;
  font-weight: bold;
}

.agency-dept {
  font-size: 12px;
  line-height: 14px;
}

.agency-name {
  font-size: 34px;
  line-height: 30px;
}

.office {
  padding: 2px 0 2px 8px;
  border-left: 2px solid #b5c9d5;
  font-family: "Liberation Sans", Arial, sans-serif;
  font-size: 20px;
  line-height: 24px;
}

.program-bar {
  height: 38px;
  padding-right: 43px;
  font-family: Roboto, "Liberation Sans", Arial, sans-serif;
  font-size: 22px;
  line-height: 38px;
  font-weight: bold;
  text-align: center;
  color: #fff;
  text-shadow: 1px 2px 2px #2d6000;
  background: #62c100;
}

.page-name {
  margin: 0;
  padding: 0 86px 2px 0;
  font-family: "Liberation Sans", Arial, sans-serif;
  font-size: 16px;
  line-height: 35px;
  text-align: center;
  color: #600;
}

.main-nav {
  display: flex;
  align-items: center;
  gap: 29px;
  height: 28px;
  padding-left: 13px;
  border: 1px solid #4b5870;
  font-family: "Open Sans", sans-serif;
  font-size: 12px;
  font-weight: bold;
  white-space: nowrap;
  color: #fff;
  background: linear-gradient(#0000b0, #000064);
}

.columns {
  display: flex;
  align-items: flex-start;
}

.sidebar {
  width: 250px;
  flex: none;
  border: 1px solid #777;
  border-top: none;
  font-family: "Open Sans", sans-serif;
  font-size: 13px;
}

.side-item {
  display: flex;
  align-items: center;
  justify-content: space-between;
  width: 100%;
  height: 29px;
  padding: 0 4px 0 11px;
  border-bottom: 1px solid #777;
  background: linear-gradient(#fdfdfd, #e6e6e6);
}

.side-item:first-child {
  height: 30px;
}

.side-item:last-child {
  height: 28px;
  border-bottom: none;
}

.side-item svg {
  width: 11px;
  height: 8px;
  color: #7a7a7a;
}

.side-item.open {
  height: 28px;
  border-top: 1px solid #2aa80a;
  background: linear-gradient(#b0e89c, #9bd886 45%, #7fb86c 50%, #9fdc8c);
}

.side-item.open svg {
  color: #2c8a14;
}

.submenu {
  margin: 0;
  padding: 3px 0 1px;
  list-style: none;
  border-bottom: 1px solid #777;
}

.submenu li {
  padding-left: 11px;
  line-height: 24px;
}

.content {
  flex: 1;
  min-width: 0;
  font-family: "DejaVu Sans", sans-serif;
}

.grant-bar {
  display: grid;
  grid-template-columns: 142px 157px 127px 1fr;
  align-items: center;
  height: 28px;
  margin: 0;
  padding: 2px 0 0 1px;
  border: 1px dashed #9fdc8c;
  font-size: 12px;
}

.grant-bar dt {
  font-weight: bold;
}

.grant-bar dd {
  margin: 0;
}

.content h2 {
  margin: 23px 0 44px;
  font-family: "Liberation Serif", "Times New Roman", serif;
  font-size: 19px;
  line-height: 21px;
  letter-spacing: 1px;
  text-align: center;
  color: #600;
}

.intro {
  margin: 0 7px;
  font-size: 14px;
  line-height: 17px;
}

.content .intro + h2 {
  margin: 37px 0 17px;
}

.panel {
  margin: 0 3px;
  padding: 13px 4px;
  height: 240px;
  border: 1px solid #ccc;
  background: #eee;
}

.details {
  width: 100%;
  table-layout: fixed;
  border-spacing: 0;
  padding-bottom: 3px;
  border-bottom: 1px solid #ccc;
  font-size: 12px;
  text-align: left;
}

.details th,
.details td {
  height: 25px;
  padding: 0 0 0 3px;
}

.details th:first-child {
  width: 171px;
}

.details td:nth-child(2) {
  width: 282px;
}

.details th:nth-child(3) {
  width: 137px;
}

.totals {
  margin-top: 12px;
  padding-bottom: 6px;
}

.totals th,
.totals td {
  height: 20px;
}

/* bottom of the screen */
.statusbar {
  display: flex;
  align-items: center;
  justify-content: space-between;
  height: 22px;
  flex: none;
  padding-left: 5px;
  background: #ece9d8;
}

.lock {
  display: flex;
  align-items: center;
  justify-content: center;
  width: 21px;
  height: 19px;
  border-left: 1px solid #c5c2b0;
}

.lock svg {
  width: 12px;
  height: 15px;
}

.taskbar {
  display: flex;
  align-items: stretch;
  height: 34px;
  flex: none;
  color: #fff;
  background: linear-gradient(#2f6fe0 0, #3f8cf3 4px, #245edb 8px, #2560e0 28px, #1941a5 34px);
}

.start {
  display: flex;
  align-items: center;
  gap: 4px;
  width: 97px;
  margin-top: 4px;
  padding: 0 0 2px 10px;
  border-radius: 0 8px 10px 0;
  font-family: "Open Sans", sans-serif;
  font-size: 17px;
  font-style: italic;
  font-weight: bold;
  text-shadow: 1px 1px 2px #1a4a10;
  background: linear-gradient(#5cb05a, #3a943a 6px, #3aa138 22px, #2c7c2a);
}

.start svg {
  width: 20px;
  height: 20px;
}

.quick-launch {
  display: flex;
  align-items: center;
  gap: 7px;
  width: 140px;
  margin: 4px 5px 0 10px;
  padding-left: 10px;
  border: dotted #1742b0;
  border-width: 0 2px;
}

.tasks {
  display: flex;
  flex: 1;
  gap: 3px;
  padding: 5px 14px 1px 2px;
}

.tasks button {
  display: flex;
  align-items: center;
  flex: 1;
  min-width: 0;
  gap: 4px;
  padding: 0 6px 0 10px;
  border-radius: 3px;
  text-align: left;
  white-space: nowrap;
  background: linear-gradient(#5a9af8, #3c81f3 5px, #3a7df0 24px, #2c66d8);
}

.tasks button.current {
  background: #1d4fb8;
  box-shadow: inset 1px 1px 2px #123a8c;
}

.tasks span {
  flex: 1;
}

.tasks b {
  color: #ffcf70;
}

.tray {
  display: flex;
  align-items: center;
  gap: 2px;
  width: 273px;
  padding: 4px 0 0 9px;
  border-left: 1px solid #0b3f9c;
  background: linear-gradient(#1290e8 4px, #18b0f5 6px, #1193ea 12px, #1290e6 28px, #0d6cc0);
}

.tray time {
  padding-left: 8px;
}
```
